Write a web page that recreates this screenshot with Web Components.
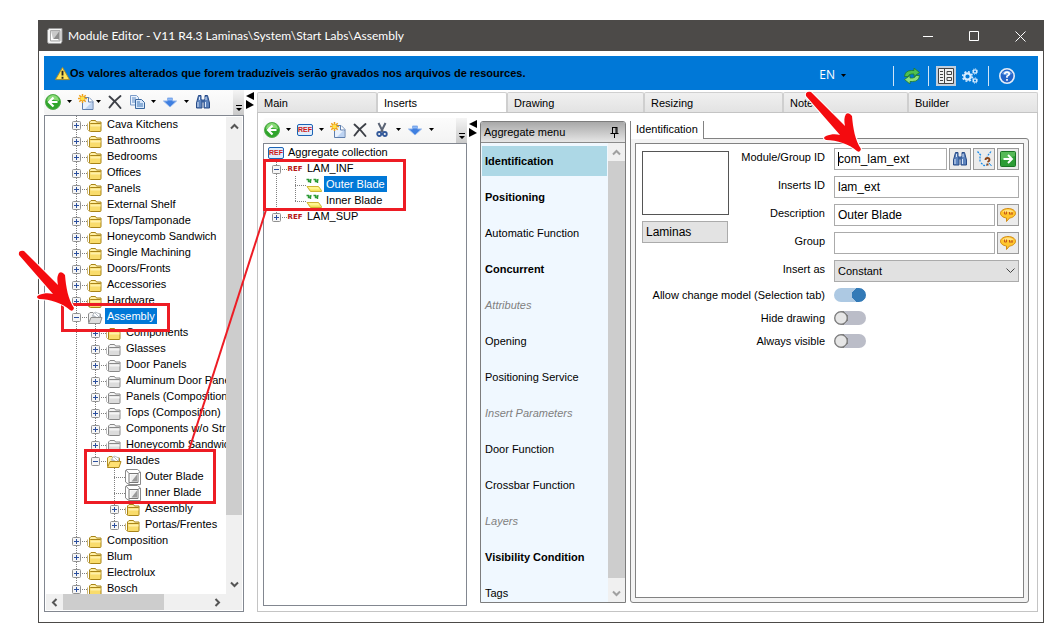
<!DOCTYPE html>
<html lang="en">
<head>
<meta charset="utf-8">
<title>Module Editor</title>
<style>
html,body{margin:0;background:#fff}
body{font:11px/16px "Liberation Sans",Arial,sans-serif;color:#000}
</style>
</head>
<body>
<module-editor></module-editor>
<script>
const define=(name,css,html,setup)=>{
  const t=document.createElement('template');
  t.innerHTML=`<style>*{box-sizing:border-box}button{font:inherit;color:inherit;border:0;background:none;padding:0;margin:0;text-align:left}${css}</style>${html}`;
  customElements.define(name,class extends HTMLElement{
    constructor(){super();this.attachShadow({mode:'open'}).append(t.content.cloneNode(true));}
    connectedCallback(){if(setup&&!this.ready){this.ready=true;setup(this,this.shadowRoot);}}
  });
};

const folder=(fill,edge,hi)=>`<path d="M2.500 13.500V5L4 3.500h4.500L9.500 5H14v2" fill="${hi}" stroke="${edge}"/><path d="M.500 6.500v6l2 2" fill="none" stroke="${edge}" opacity=".6"/><rect x="2.500" y="6.500" width="11.500" height="8" rx="1" fill="${fill}" stroke="${edge}"/><path d="M3.500 7.500h10v2h-10z" fill="${hi}"/>`;
const folderOpen=(fill,edge,hi)=>`<path d="M1.500 13.500V5L3 3.500h3L7 5h6.500v3" fill="${hi}" stroke="${edge}"/><path d="M5 7l3-4 5 2-1 4z" fill="#fff" stroke="#a9b0b8" stroke-width=".8"/><path d="M6 6l4 3M8 4l4 4" stroke="#9aa4b0" stroke-width=".7"/><path d="M1.500 14.500L4 8.500h11l-2 6z" fill="${fill}" stroke="${edge}"/>`;
const bino=`<g fill="#5c83bd" stroke="#274a86"><path d="M3.500 1.500h2.500v3.500l1 2v7H1.500V9z"/><path d="M10 1.500h2.500L14.500 9v5H9V7l1-2z"/></g><path d="M6.500 5.500h3v3h-3z" fill="#38609f"/><path d="M3 8v5M10.500 8v5M4.500 3v3M11 3v3" stroke="#d8e6fa"/>`;
const bubble=`<path d="M8 1.500c4 0 7.500 2 7.500 4.700S12 11 9.500 11L6.500 14.500 6.500 11C3 10.500.5 8.700.5 6.200S4 1.500 8 1.500z" fill="#ffc62e" stroke="#d28b14"/><path d="M2.500 5Q4 2.500 8 2.500T13.500 5z" fill="#ffe083"/><path d="M4.500 4.500v2.500h2V4.500M9 7h4M9.500 5v2M12 5v2" stroke="#c45a1c" fill="none"/>`;
const ICONS={
  cube:`<path d="M.5 2.500L2 .5h13v13l-1 2H1.500L.5 14z" fill="#f4f4f4" stroke="#999"/><path d="M4 3h8.500v9.500H4z" fill="#8c8c8c"/><path d="M4 3h8.500L5.500 12.500H4z" fill="#c9c9c9"/><path d="M4 3v9.500h8.500L11 11H6z" fill="#fff"/><path d="M3.500 2.500V13h9.500V2.500z" fill="none" stroke="#aaa"/>`,
  block:`<path d="M.5 1.500l1-1h11l3 2.500v12.500H4L.5 13z" fill="#fff" stroke="#8a8a8a"/><path d="M4 4.500h9v9H4z" fill="#fff" stroke="#777"/><path d="M5.500 5.500h6.500v7h-6.500z" fill="#eee"/><path d="M12 5.500v7H6.500z" fill="#9a9a9a"/><path d="M1 1l3 3.500M13 4.500L15 3M4 13.500v2" fill="none" stroke="#8a8a8a"/>`,
  folder:folder('#f9dc6c','#a88417','#fff0a8'),
  grayfolder:folder('#dcdcdc','#888','#f4f4f4'),
  open:folderOpen('#ffe174','#b08a1d','#fff2ac'),
  grayopen:folderOpen('#ddd','#8b8b8b','#f4f4f4'),
  blade:`<path d="M.500 2.500h2v2h2v1.500M3.500 3.500l2-1M7.500 2.500h2v2h2v1.500M10.500 3.500l2-1" stroke="#2b9a35" stroke-width="1.400" fill="none"/><path d="M1 9.500h11.500l3 4v1H4.500z" fill="#f3e25d" stroke="#cdb436"/><path d="M2 10h10l2 2.500H4.500z" fill="#fff690"/>`,
  back:`<circle cx="8" cy="8" r="7.500" fill="#2fa52b" stroke="#54ad4d"/><path d="M2 7a6 6 0 0 1 12 0q-6-2-12 0z" fill="#8ada78"/><path d="M8.500 3.500L4 8l4.500 4.500M4.500 8H12.500" fill="none" stroke="#fff" stroke-width="2.200"/>`,
  newdoc:`<path d="M4.500 3.500H11l4 4v8H4.500z" fill="#e9f1fd" stroke="#5f7fae"/><path d="M10.500 3.500v4.500H15" fill="#fff" stroke="#5f7fae"/><path d="M14 8v7H7z" fill="#bdd3f2"/><path d="M4.500 0v9M0 4.500h9M1.300 1.300l6.400 6.400M7.700 1.300L1.300 7.700" stroke="#f0a11a" stroke-width="1.500"/><circle cx="4.500" cy="4.500" r="2" fill="#ffe34a"/>`,
  cross:`<path d="M2.500 2.500q6 5 11 11.500M13.500 2Q7 7 2.500 13.500" fill="none" stroke="#3d4047" stroke-width="1.900" stroke-linecap="round"/>`,
  copy:`<path d="M1.500 1.500h6l2 2V11h-8z" fill="#eaf2fd" stroke="#7b9cc9"/><path d="M3 4h4M3 6h3M3 8h3" stroke="#5f8bc5"/><path d="M6.500 5.500h6l3 3v6h-9z" fill="#d7e7fb" stroke="#38679f"/><path d="M8 8h3M8 10h6M8 12h6" stroke="#3f76b5"/>`,
  down:`<path d="M5.500 4h5v3h4L8 13 1.500 7h4z" fill="#3f7fe0" stroke="#8cb2ec"/><path d="M6 4.500h4v2H6z" fill="#8fb8f5"/>`,
  bino,
  cut:`<path d="M4.500 1l4.500 9M11.500 1L7 10" stroke="#5b6475" stroke-width="2"/><circle cx="5.200" cy="12" r="2" fill="none" stroke="#33599a" stroke-width="1.800"/><circle cx="10.800" cy="12" r="2" fill="none" stroke="#33599a" stroke-width="1.800"/>`,
  warn:`<path d="M8 1.500L15.500 14.500H.5z" fill="#ffe458" stroke="#a78a2a" stroke-linejoin="round"/><path d="M8 5v5M8 11.500v2" stroke="#222" stroke-width="2"/>`,
  refresh:`<path d="M.500 8.500Q1 2.500 7.500 2.500H10V0L15.500 4.500 10 8.500V6H7.500Q5 6 4 8.500z" fill="#4fc04f" stroke="#1f7a2b" stroke-width=".8"/><path d="M15.500 7.500Q15 13.500 8.500 13.500H6V16L.500 11.500 6 7.500V10h2.500Q11 10 12 7.500z" fill="#8ce07c" stroke="#1f7a2b" stroke-width=".8"/>`,
  layout:`<path d="M.5.500h15v15H.5z" fill="#f2f2f2" stroke="#444"/><path d="M6.500.500v15M9 3.500h4.500v3H9zM9 9.500h4.500v3H9z" fill="none" stroke="#444"/><path d="M2 3.500h3M2 6.500h3M2 9.500h3M2 12.500h3" stroke="#444"/>`,
  gears:`<g fill="none" stroke="#d8ecff"><circle cx="5.500" cy="8.500" r="3.200" stroke-width="2.200"/><circle cx="5.500" cy="8.500" r="4.800" stroke-width="1.600" stroke-dasharray="1.900 1.870"/><circle cx="13" cy="3.500" r="1.700" stroke-width="1.300"/><circle cx="13" cy="3.500" r="2.700" stroke-dasharray="1 1.100"/><circle cx="13" cy="12.500" r="1.700" stroke-width="1.300"/><circle cx="13" cy="12.500" r="2.700" stroke-dasharray="1 1.100"/></g>`,
  help:`<circle cx="8" cy="8" r="7.200" fill="#2464c8" stroke="#e6edf8" stroke-width="1.600"/><path d="M3 6a5.500 5.500 0 0 1 10 0q-5 2-10 0z" fill="#6da2ea"/><path d="M5.700 6.300Q5.800 4.200 8 4.200t2.300 1.900Q10.300 7.300 8 8.300v1.500M8 11v1.800" fill="none" stroke="#fff" stroke-width="1.700"/>`,
  path:`<path d="M1.500.5l4 4.500M4 5.500v6M5 12l3 2.500 3-.5M15 .5L11 5.500" fill="none" stroke="#178bea" stroke-width="1.200" stroke-dasharray="2 1"/><path d="M9.500 9q0-2 2-2t2 2q0 1-2 2" fill="none" stroke="#8a4215" stroke-width="1.900"/><path d="M10.500 12.500h2v2h-2z" fill="#8a4215"/><path d="M13 12l2.500 3" stroke="#178bea"/>`,
  go:`<rect x=".5" y=".5" width="15" height="15" rx="1" fill="#2c9c35" stroke="#1b7424"/><path d="M1 1h14v4L1 9z" fill="#56b957"/><path d="M3.500 8h8M8 4l4 4-4 4" fill="none" stroke="#fff" stroke-width="1.900"/>`,
  bubble,
  pin:`<path d="M6 3.500h5M6.500 3v6M10 3v6M11 3v6M4.500 9.500h8M8.500 10v4" stroke="#000" fill="none"/>`
};
define('ui-icon',`:host{display:block;width:16px;height:16px;flex:none}span{display:block;height:100%}svg{display:block;width:100%;height:100%}
span.ref{display:flex;align-items:center;justify-content:center;font:bold 7px/8px "DejaVu Sans","Liberation Sans",sans-serif;color:#b51515}
span.boxed{height:12px;margin-top:2px;border:1px solid #1b63b5;border-radius:2px;background:#dfedfb;color:#d01818;font-family:"Liberation Sans",sans-serif}`,'<span></span>',(h,r)=>{
  const n=h.getAttribute('name'),s=r.querySelector('span');
  if(n==='ref'||n==='refbox'){s.className=n==='ref'?'ref':'ref boxed';s.textContent='REF';}
  else if(ICONS[n])s.innerHTML=`<svg viewBox="0 0 16 16" aria-hidden="true">${ICONS[n]}</svg>`;
});
define('drop-caret',':host{display:block;width:5px;flex:none}svg{display:block}','<svg width="5" height="3"><path d="M0 0h5L2.500 3z"/></svg>');

define('tool-strip',`:host{display:flex;height:25px;padding-left:1px;background:linear-gradient(#fcfcfc,#f3f3f3);border-radius:3px}
.items{display:flex;flex:1;align-items:center;gap:6px;height:23px}
.more{width:11px;background:linear-gradient(#f5f5f5,#c9c9c9);display:flex;align-items:flex-end;justify-content:center;padding-bottom:3px}`,
`<div class="items"><slot></slot></div><button class="more" aria-label="More"><svg width="6" height="7"><path d="M0 0h6v1H0zM0 3h6L3 6z"/></svg></button>`);
define('tool-button',`:host{display:block}button{display:flex;align-items:center;gap:6px}:host([tight]) button{gap:2px}drop-caret{display:none}:host([drop]) drop-caret{display:block}`,
`<button><ui-icon></ui-icon><drop-caret></drop-caret></button>`,(h,r)=>{
  const i=document.createElement('ui-icon');i.setAttribute('name',h.getAttribute('icon'));r.querySelector('ui-icon').replaceWith(i);
  r.querySelector('button').setAttribute('aria-label',h.getAttribute('icon'));
});
define('split-grip',':host{display:block;padding:2px 2px 0}svg{display:block}','<svg width="9" height="17"><path d="M8 0v8L0 4zM0 8v9l8-4z"/></svg>');

define('scroll-bar',`:host{display:flex;flex-direction:column;background:#f0f0f0;--c:#555}
:host([horizontal]){flex-direction:row}
:host([dim]){--c:#a0a0a0}
button{flex:none;width:16px;height:18px;display:flex;align-items:center;justify-content:center}
:host([horizontal]) button{width:17px;height:16px}
:host([horizontal]) svg{transform:rotate(-90deg)}
svg{fill:none;stroke:var(--c);stroke-width:2}
.thumb{background:#cdcdcd}`,
`<button aria-label="Back"><svg width="9" height="7"><path d="M1 5.500L4.500 2 8 5.500"/></svg></button><div class="a"></div><div class="thumb"></div><div class="b"></div><button aria-label="Forward"><svg width="9" height="7"><path d="M1 1.500L4.500 5 8 1.500"/></svg></button>`,(h,r)=>{
  const [a,t,b]=h.getAttribute('parts').split(' ');
  r.querySelector('.a').style.flex=a+' 0 0';r.querySelector('.thumb').style.flex=t+' 0 0';r.querySelector('.b').style.flex=b+' 0 0';
});

define('tree-row',`:host{display:flex;height:16px;white-space:nowrap}
.g{flex:none;display:block}ui-icon{margin-top:1px}
.t{margin-left:2px;padding:0 2px;height:16px;line-height:16px}:host([selected]) .t{background:#0078d7;color:#fff}`,
`<svg class="g" height="16"></svg><ui-icon></ui-icon><span class="t"><slot></slot></span>`,(h,r)=>{
  const at=+h.getAttribute('at'),kind=h.getAttribute('kind'),g=r.querySelector('.g');
  const w=kind==='root'?4:at+11;g.setAttribute('width',w);
  let s='';const line=d=>`<path d="${d}" stroke="#808080" stroke-dasharray="1 1" fill="none"/>`;
  (h.getAttribute('lines')||'').split(' ').filter(Boolean).forEach(x=>s+=line(`M${+x+.5} 0V16`));
  if(kind!=='root'){
    s+=line(`M${at+.5} 0V${h.hasAttribute('last')?10:16}`)+line(`M${at} 9.500H${w}`);
    if(kind!=='leaf')s+=`<rect x="${at-4+.5}" y="5.500" width="8" height="8" rx="1" fill="#f6f6f6" stroke="#919191"/><path d="M${at-2} 9.500h5${kind==='plus'?`M${at+.5} 7v5`:''}" stroke="#2b4f9e"/>`;
  }
  g.innerHTML=s;
  const i=document.createElement('ui-icon');i.setAttribute('name',h.getAttribute('icon'));r.querySelector('ui-icon').replaceWith(i);
});
const rows=a=>a.map(([t,at,kind,icon,lines='',extra=''])=>`<tree-row at="${at}" kind="${kind}" icon="${icon}" lines="${lines}" ${extra}>${t}</tree-row>`).join('');
const rootItem=t=>[t,31,'plus','folder'];
const subItem=(t,i='grayfolder')=>[t,50,'plus',i,'31'];
define('catalog-tree',`:host{display:grid;grid-template:minmax(0,1fr) 16px/minmax(0,1fr) 16px;border:1px solid #828790;padding:0 1px 1px 0;background:#fff}
.view{overflow:hidden}scroll-bar.v{margin-top:1px}scroll-bar.h{margin-left:1px}.corner{background:#f0f0f0}`,
`<div class="view">${rows([
 ...['Cava Kitchens','Bathrooms','Bedrooms','Offices','Panels','External Shelf','Tops/Tamponade','Honeycomb Sandwich','Single Machining','Doors/Fronts','Accessories','Hardware'].map(rootItem),
 ['Assembly',31,'minus','grayopen','','selected'],
 subItem('Components','folder'),...['Glasses','Door Panels','Aluminum Door Panels','Panels (Composition)','Tops (Composition)','Components w/o Structure','Honeycomb Sandwich'].map(t=>subItem(t)),
 ['Blades',50,'minus','open','31','last'],
 ['Outer Blade',69,'leaf','block','31'],['Inner Blade',69,'leaf','block','31'],
 ['Assembly',69,'plus','folder','31'],['Portas/Frentes',69,'plus','folder','31','last'],
 ...['Composition','Blum','Electrolux','Bosch'].map(rootItem)])}</div>
<scroll-bar class="v" parts="25 356 61"></scroll-bar><scroll-bar class="h" horizontal parts="0 101 45"></scroll-bar><div class="corner"></div>`);
define('insert-tree',':host{display:block;border:1px solid #828790;background:#fff;overflow:hidden}',
rows([['Aggregate collection',0,'root','refbox'],['LAM_INF',12,'minus','ref'],['Outer Blade',31,'leaf','blade','12','selected'],['Inner Blade',31,'leaf','blade','12','last'],['LAM_SUP',12,'plus','ref','','last']]));

define('dock-menu',`:host{display:flex;flex-direction:column;border:1px solid #7d7d7d;border-radius:3px 3px 0 0;background:#f0f8ff;overflow:hidden}
header{display:flex;align-items:center;height:21px;flex:none;padding:0 3px;justify-content:space-between;background:linear-gradient(#a8a8a8,#e6e6e6);border-bottom:1px solid #8a8a8a}
.body{display:flex;flex:1;min-height:0}
nav{flex:1;overflow:hidden;display:flex;flex-direction:column;gap:6px;padding:3px 1px 0;min-width:0}
nav button{flex:none;height:30px;padding-left:3px}
.on{background:#add8e6}.b{font-weight:bold}.i{font-style:italic;color:#808080}
scroll-bar{width:17px}`,
`<header><span>Aggregate menu</span><button aria-label="Pin"><ui-icon name="pin"></ui-icon></button></header>
<div class="body"><nav>${[['Identification','b on'],['Positioning','b'],['Automatic Function',''],['Concurrent','b'],['Attributes','i'],['Opening',''],['Positioning Service',''],['Insert Parameters','i'],['Door Function',''],['Crossbar Function',''],['Layers','i'],['Visibility Condition','b'],['Tags','']].map(([t,c])=>`<button class="${c}">${t}</button>`).join('')}</nav><scroll-bar dim parts="0 417 6"></scroll-bar></div>`);

define('identification-form',`:host{display:flex;flex-direction:column}
.tab{position:relative;align-self:flex-start;height:18px;line-height:17px;padding:0 5px;border:1px solid #828282;border-width:0 1px;background:#fff;margin-bottom:-1px}
.outer{flex:1;border:1px solid #828282;border-radius:0 3px 3px 3px;padding:4px;background:#f3f3f3;display:flex}
form{flex:1;border:1px solid #828282;background:#fff;padding:4px 4px 0 6px}
.top{display:flex}
.pic{width:88px;padding-top:3px;flex:none}
.preview{width:87px;height:64px;border:1px solid #555;background:#fff}
input:not([type=checkbox]),select{height:22px;min-width:0;width:100%;border:1px solid #ababab;font:12px/16px "Liberation Sans",Arial,sans-serif;padding:0 3px;background:#fff;color:#000;border-radius:0;outline:0}
.pic input{margin-top:6px;width:86px;background:#e3e3e3}
.fields{flex:1;display:grid;grid-template-columns:96px minmax(0,1fr);gap:6px 8px}
label{text-align:right;line-height:18px;padding-right:1px}
.line{display:flex;gap:2px}
.line button{flex:none;width:22px;height:22px;border:1px solid #9b9b9b;background:#ececec;display:flex;align-items:center;justify-content:center}
.sel{position:relative;display:block}
select{appearance:none;background:#e1e1e1;font-size:11px}
.sel svg{position:absolute;right:4px;top:8px;fill:none;stroke:#444}
.toggles{display:grid;grid-template-columns:184px 32px;gap:9px 8px;margin-top:6px;align-items:center}
.toggles label{line-height:14px}
input[type=checkbox]{appearance:none;display:block;margin:0;width:32px;height:14px;border-radius:7px;background:radial-gradient(circle at 7px 7px,#e6e6e6 0 5px,#818181 6px 7px,transparent 7px) #bbbdc8}
input[type=checkbox]:checked{background:radial-gradient(circle at 25px 7px,#337ab7 0 7px,transparent 7px) #adc9e3}
#mid{background:linear-gradient(#000,#000) 3px 3px/1px 14px no-repeat #fff}`,
`<div class="tab">Identification</div><div class="outer"><form><div class="top">
<div class="pic"><div class="preview"></div><input aria-label="Library" value="Laminas" readonly></div>
<div class="fields">
<label for="mid">Module/Group ID</label><div class="line"><input id="mid" value="com_lam_ext"><button type="button" aria-label="Find"><ui-icon name="bino"></ui-icon></button><button type="button" aria-label="Locate"><ui-icon name="path"></ui-icon></button><button type="button" aria-label="Go"><ui-icon name="go"></ui-icon></button></div>
<label for="iid">Inserts ID</label><input id="iid" value="lam_ext">
<label for="des">Description</label><div class="line"><input id="des" value="Outer Blade"><button type="button" aria-label="Translate description"><ui-icon name="bubble"></ui-icon></button></div>
<label for="grp">Group</label><div class="line"><input id="grp"><button type="button" aria-label="Translate group"><ui-icon name="bubble"></ui-icon></button></div>
<label for="ins">Insert as</label><div class="sel"><select id="ins"><option>Constant</option></select><svg width="9" height="6"><path d="M.5.500l4 4 4-4"/></svg></div>
</div></div>
<div class="toggles"><label for="t1">Allow change model (Selection tab)</label><input id="t1" type="checkbox" checked><label for="t2">Hide drawing</label><input id="t2" type="checkbox"><label for="t3">Always visible</label><input id="t3" type="checkbox"></div>
</form></div>`);

define('notice-bar',`:host{display:flex;align-items:center;height:34px;background:#0078d7;flex:none;padding:0 23px 0 11px}
.msg{display:flex;align-items:center;flex:1;font-weight:bold;white-space:nowrap}
.msg ui-icon{width:15px;height:15px}
.lang{display:flex;align-items:center;gap:6px;color:#fff;font:12px/16px "Open Sans","Noto Sans",sans-serif;margin-top:4px}
.acts{display:flex;align-items:center;margin-top:6px;margin-left:47px}
i{width:1px;height:20px;background:#cfe4f7}
.on{background:#c3cfdc;padding:2px}`,
`<div class="msg"><ui-icon name="warn"></ui-icon><span>Os valores alterados que forem traduzíveis serão gravados nos arquivos de resources.</span></div>
<button class="lang">EN<drop-caret></drop-caret></button>
<div class="acts"><i></i><button aria-label="Refresh" style="margin:0 8px 0 10px"><ui-icon name="refresh"></ui-icon></button><i></i><button class="on" aria-label="Layout" style="margin:0 6px 0 7px"><ui-icon name="layout"></ui-icon></button><button aria-label="Settings" style="margin-right:10px"><ui-icon name="gears"></ui-icon></button><i></i><button aria-label="Help" style="margin-left:10px"><ui-icon name="help"></ui-icon></button></div>`);

define('title-bar',`:host{display:flex;align-items:center;height:30px;background:#4c4a48;color:#fff;padding-left:8px;font:12px/16px Lato,"Open Sans",sans-serif;flex:none}
span{margin-left:5px;flex:1}button{width:46px;height:30px;display:flex;align-items:center;justify-content:center}svg{fill:none;stroke:#fff}`,
`<ui-icon name="cube"></ui-icon><span><slot></slot></span>
<button aria-label="Minimize"><svg width="10" height="10"><path d="M0 5.500h10"/></svg></button><button aria-label="Maximize"><svg width="10" height="10"><path d="M.5.500h9v9h-9z"/></svg></button><button aria-label="Close"><svg width="11" height="11"><path d="M.5.500l10 10M10.500.500l-10 10"/></svg></button>`);

define('tab-strip',`:host{display:grid;grid-template-columns:120fr 130fr 137fr 139fr 125fr 130fr;height:20px;margin-top:2px}
button{background:linear-gradient(#f0f0f0,#e3e3e3);border:1px solid #cfcfcf;border-bottom:0;padding-left:6px;border-radius:2px 2px 0 0;min-width:0}
button[aria-selected=true]{background:#fff}`,
`<button role="tab">Main</button><button role="tab" aria-selected="true">Inserts</button><button role="tab">Drawing</button><button role="tab">Resizing</button><button role="tab">Notes</button><button role="tab">Builder</button>`);

define('callout-marks',':host{position:absolute;left:0;top:0;pointer-events:none}svg{display:block}',
`<svg width="1052" height="634" viewBox="0 0 1052 634" aria-hidden="true"><defs><path id="arrow" d="M19 255Q18 250 24 251L58 285C57 280 57 276 59 273Q62 271 65 275C66 287 68 299 74 308Q73 312 70 310C62 303 50 299 39 299Q35 297 39 295C44 293 49 293 53 294Z"/></defs>
<g fill="none" stroke="#ed1c24" stroke-width="3"><path d="M62.500 304.500h106v26h-106zM85.500 450.500h129v52h-129zM264.500 160.500h140v49h-140z"/><path d="M266 210L189 450" stroke-width="2"/></g>
<g fill="#f40b0f" stroke="#fff" stroke-width="2" paint-order="stroke"><use href="#arrow"/><use href="#arrow" x="787" y="-159"/></g></svg>`);

define('module-editor',`:host{display:block;height:100vh;min-height:400px;padding:20px 8px 11px 38px;position:relative;box-sizing:border-box}
.win{display:flex;flex-direction:column;height:100%;border:1px solid #4c4a48;background:#fff}
.body{flex:1;min-height:0;display:flex;flex-direction:column;padding:5px 5px 10px}
main{flex:1;min-height:0;display:grid;grid-template-columns:200px 13px minmax(0,1fr);grid-template-rows:minmax(0,1fr)}
.col{display:flex;flex-direction:column;min-height:0;min-width:0}
catalog-tree,insert-tree{flex:1;min-height:0}
.panel{flex:1;min-height:0;border:1px solid #c4c4c4;padding:5px 8px 5px 5px;display:grid;grid-template-columns:204px 13px 146px minmax(0,1fr);grid-template-rows:minmax(0,1fr)}
dock-menu{margin:3px 0}identification-form{margin:3px 0 3px 4px}`,
`<div class="win"><title-bar>Module Editor - V11 R4.3 Laminas\\System\\Start Labs\\Assembly</title-bar>
<div class="body"><notice-bar></notice-bar><main>
<div class="col"><tool-strip><tool-button icon="back" drop></tool-button><tool-button icon="newdoc" drop tight></tool-button><tool-button icon="cross"></tool-button><tool-button icon="copy" drop></tool-button><tool-button icon="down" drop></tool-button><tool-button icon="bino"></tool-button></tool-strip><catalog-tree></catalog-tree></div>
<split-grip></split-grip>
<div class="col"><tab-strip></tab-strip><div class="panel">
<div class="col"><tool-strip><tool-button icon="back" drop></tool-button><tool-button icon="refbox" drop></tool-button><tool-button icon="newdoc"></tool-button><tool-button icon="cross"></tool-button><tool-button icon="cut" drop></tool-button><tool-button icon="down" drop></tool-button></tool-strip><insert-tree></insert-tree></div>
<split-grip></split-grip><dock-menu></dock-menu><identification-form></identification-form>
</div></div></main></div></div><callout-marks></callout-marks>`);
</script>
</body>
</html>
